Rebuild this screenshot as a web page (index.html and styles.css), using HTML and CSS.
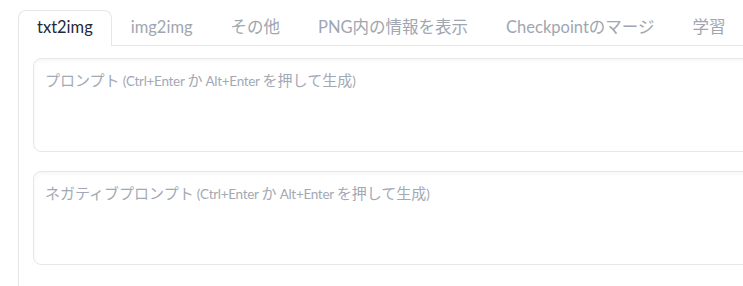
FILE: index.html
```html
<!DOCTYPE html>
<html lang="ja">
<head>
<meta charset="utf-8">
<link rel="stylesheet" href="styles.css">
</head>
<body>
<div class="app">
  <div class="tabs">
    <div class="tab active">txt2img</div>
    <div class="tab">img2img</div>
    <div class="tab">その他</div>
    <div class="tab">PNG内の情報を表示</div>
    <div class="tab">Checkpointのマージ</div>
    <div class="tab">学習</div>
  </div>
  <div class="panel">
    <div class="field">
      <textarea class="prompt" aria-label="プロンプト"></textarea>
      <div class="ph">プロンプト<span class="lat"> (Ctrl+Enter </span>か<span class="lat"> Alt+Enter </span>を押して生成<span class="lat">)</span></div>
    </div>
    <div class="field">
      <textarea class="prompt" aria-label="ネガティブプロンプト"></textarea>
      <div class="ph">ネガティブプロンプト<span class="lat"> (Ctrl+Enter </span>か<span class="lat"> Alt+Enter </span>を押して生成<span class="lat">)</span></div>
    </div>
  </div>
</div>
</body>
</html>
```

FILE: styles.css
```css
html, body {
  margin: 0;
  padding: 0;
  background: #ffffff;
  overflow: hidden;
}
body {
  font-family: "Lato", "Noto Sans CJK JP", sans-serif;
  width: 743px;
  height: 286px;
}
.app {
  width: 1100px;
  padding: 10px 0 0 18px;
}
.tabs {
  display: flex;
  border-bottom: 1px solid #e5e7eb;
  height: 35px;
}
.tab {
  padding: 0 18px;
  border: 1px solid transparent;
  border-bottom: none;
  font-size: 16.5px;
  font-weight: 400;
  line-height: 33px;
  color: #a0a6b1;
  white-space: nowrap;
  border-radius: 8px 8px 0 0;
  margin-bottom: -1px;
}
.tab.active {
  color: #1f2937;
  border-color: #e5e7eb;
  background: #ffffff;
  height: 35px;
}
.panel {
  border-left: 1px solid #e5e7eb;
  padding: 12px 14px 30px 14px;
  display: flex;
  flex-direction: column;
  gap: 19px;
}
.field {
  position: relative;
  display: flex;
}
.prompt {
  flex: 1;
  height: 94px;
  box-sizing: border-box;
  border: 1px solid #e5e7eb;
  border-radius: 8px;
  padding: 9px 11px;
  font-family: "Lato", "Noto Sans CJK JP", sans-serif;
  font-size: 15px;
  line-height: 24px;
  color: #374151;
  resize: none;
  outline: none;
  box-shadow: inset 0 2px 4px 0 rgba(0, 0, 0, 0.04);
  background: #ffffff;
}
.ph {
  position: absolute;
  left: 12px;
  top: 10px;
  pointer-events: none;
  font-size: 15px;
  line-height: 24px;
  color: #a3a9b4;
  white-space: nowrap;
}
.ph .lat {
  font-size: 13.5px;
  letter-spacing: -0.3px;
}
```
